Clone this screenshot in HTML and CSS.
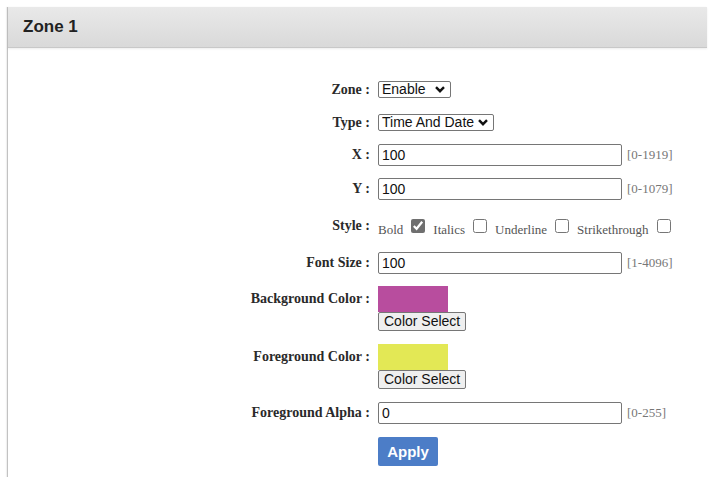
FILE: index.html
```html
<!DOCTYPE html>
<html>
<head>
<meta charset="utf-8">
<title>Zone 1</title>
<link rel="stylesheet" href="styles.css">
</head>
<body>
<div class="panel">
  <div class="panel-head">Zone 1</div>
  <div class="panel-body">
    <div class="row r-zone">
      <span class="lbl">Zone :</span>
      <span class="selwrap">
        <select class="sel sel-zone"><option>Enable</option><option>Disable</option></select>
        <svg class="chev" width="10" height="7" viewBox="0 0 10 7"><path d="M1 1.2 L5 5.2 L9 1.2" fill="none" stroke="#111" stroke-width="2.4"/></svg>
      </span>
    </div>
    <div class="row r-type">
      <span class="lbl">Type :</span>
      <span class="selwrap">
        <select class="sel sel-type"><option>Time And Date</option><option>Text</option></select>
        <svg class="chev" width="10" height="7" viewBox="0 0 10 7"><path d="M1 1.2 L5 5.2 L9 1.2" fill="none" stroke="#111" stroke-width="2.4"/></svg>
      </span>
    </div>
    <div class="row r-x">
      <span class="lbl">X :</span>
      <input class="txt" type="text" value="100">
      <span class="range">[0-1919]</span>
    </div>
    <div class="row r-y">
      <span class="lbl">Y :</span>
      <input class="txt" type="text" value="100">
      <span class="range">[0-1079]</span>
    </div>
    <div class="row r-style">
      <span class="lbl">Style :</span>
      <div class="opts">
        <span class="opt">Bold</span><input class="chk" type="checkbox" checked>
        <span class="opt">Italics</span><input class="chk" type="checkbox">
        <span class="opt">Underline</span><input class="chk" type="checkbox">
        <span class="opt">Strikethrough</span><input class="chk" type="checkbox">
      </div>
    </div>
    <div class="row r-fs">
      <span class="lbl">Font Size :</span>
      <input class="txt" type="text" value="100">
      <span class="range">[1-4096]</span>
    </div>
    <div class="row top r-bg">
      <span class="lbl tall">Background Color :</span>
      <div class="colorbox">
        <div class="swatch swatch-bg"></div>
        <button class="cbtn" type="button">Color Select</button>
      </div>
    </div>
    <div class="row top r-fg">
      <span class="lbl tall">Foreground Color :</span>
      <div class="colorbox">
        <div class="swatch swatch-fg"></div>
        <button class="cbtn" type="button">Color Select</button>
      </div>
    </div>
    <div class="row r-alpha">
      <span class="lbl">Foreground Alpha :</span>
      <input class="txt" type="text" value="0">
      <span class="range">[0-255]</span>
    </div>
    <div class="row r-apply">
      <span class="lbl"></span>
      <button class="apply" type="button">Apply</button>
    </div>
  </div>
</div>
</body>
</html>
```
FILE: styles.css
```css
html, body {
  margin: 0;
  padding: 0;
  background: #ffffff;
}

.panel {
  margin: 7px 0 0 7px;
  width: 699px;
  border-left: 1px solid #c2c2c2;
  box-shadow: -1px 0 1px rgba(0, 0, 0, 0.06);
}

.panel-head {
  height: 40px;
  border-bottom: 1px solid #c8c8c8;
  background: linear-gradient(#e9e9e9, #d9d9d9);
  box-shadow: 0 1px 2px rgba(0, 0, 0, 0.08);
  font: bold 17px "Liberation Sans", Arial, sans-serif;
  color: #222;
  line-height: 40px;
  padding-left: 15px;
}

.panel-body {
  padding: 33px 0 11px 0;
  display: flex;
  flex-direction: column;
}

.row {
  display: flex;
  align-items: center;
}

.row.top {
  align-items: flex-start;
}

.r-type { margin-top: 16px; }
.r-x { margin-top: 13px; }
.r-y { margin-top: 12px; }
.r-style { margin-top: 18px; }
.r-fs { margin-top: 18px; }
.r-bg { margin-top: 12px; }
.r-fg { margin-top: 13px; }
.r-alpha { margin-top: 13px; }
.r-apply { margin-top: 13px; }

.lbl {
  flex: none;
  width: 362px;
  margin-right: 8px;
  text-align: right;
  font: bold 14px "Liberation Serif", "Times New Roman", serif;
  color: #2a2a2a;
  white-space: nowrap;
}

.lbl.tall {
  line-height: 26px;
}

.selwrap {
  position: relative;
  display: inline-block;
  height: 17px;
}

.sel {
  -webkit-appearance: none;
  appearance: none;
  display: block;
  height: 17px;
  padding: 0 0 0 3px;
  margin: 0;
  font: 14px "Liberation Sans", Arial, sans-serif;
  line-height: 15px;
  color: #111;
  border: 1px solid #767676;
  border-radius: 2px;
  background: #fff;
  box-sizing: border-box;
}

.sel-zone { width: 73px; }
.sel-type { width: 116px; }

.chev {
  position: absolute;
  right: 6px;
  top: 5px;
  pointer-events: none;
}

.txt {
  width: 244px;
  height: 22px;
  margin: 0;
  padding: 0 3px;
  box-sizing: border-box;
  border: 1px solid #767676;
  border-radius: 2px;
  font: 14px "Liberation Sans", Arial, sans-serif;
  color: #111;
}

.range {
  margin-left: 5px;
  font: 13px "Liberation Serif", "Times New Roman", serif;
  color: #777;
}

.opts {
  display: flex;
  align-items: flex-end;
  height: 14px;
}

.opt {
  font: 13px "Liberation Serif", "Times New Roman", serif;
  line-height: 13px;
  color: #555;
  margin-bottom: -3px;
}

.chk {
  width: 14px;
  height: 14px;
  margin: 0 8px 0 8px;
  accent-color: #6f6f6f;
}

.colorbox {
  display: flex;
  flex-direction: column;
  align-items: flex-start;
}

.swatch {
  width: 70px;
  height: 26px;
}

.swatch-bg { background: #b84d9e; }
.swatch-fg { background: #e3e855; }

.cbtn {
  height: 19px;
  margin: 0;
  padding: 0 5px;
  font: 14px "Liberation Sans", Arial, sans-serif;
  color: #111;
  background: #efefef;
  border: 1px solid #767676;
  border-radius: 2px;
  line-height: 17px;
}

.apply {
  width: 60px;
  height: 29px;
  margin: 0;
  padding: 0;
  border: none;
  border-radius: 2px;
  background: #4c7dc7;
  color: #fff;
  font: bold 15px "Liberation Sans", Arial, sans-serif;
}
```
